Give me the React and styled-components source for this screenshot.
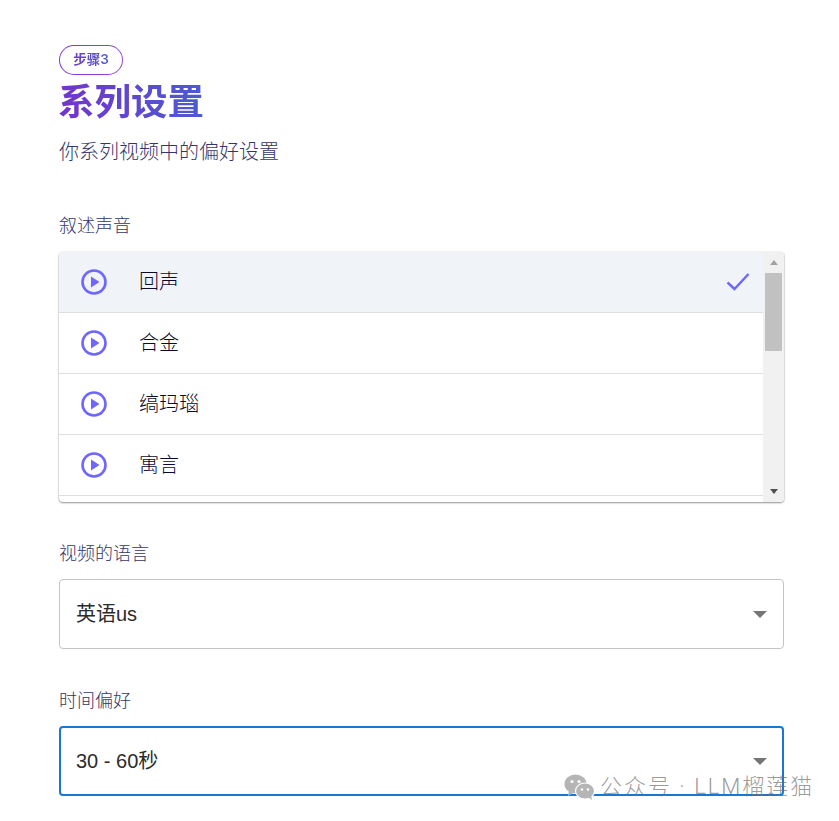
import React from 'react';
import styled, { createGlobalStyle } from 'styled-components';

const FONT = 'Roboto, "Noto Sans CJK SC", sans-serif';

const GlobalStyle = createGlobalStyle`
  html, body {
    margin: 0;
    padding: 0;
    background: #fff;
  }
  body {
    font-family: ${FONT};
  }
`;

const Page = styled.div`
  position: relative;
  width: 839px;
  height: 821px;
  overflow: hidden;
  padding: 45px 55px 0 59px;
  box-sizing: border-box;
`;

const Badge = styled.div`
  display: flex;
  align-items: center;
  justify-content: center;
  box-sizing: border-box;
  width: 64px;
  height: 30px;
  border: 1px solid transparent;
  border-radius: 15px;
  background:
    linear-gradient(#fff, #fff) padding-box,
    linear-gradient(90deg, #7a35d8, #8f4ae0) border-box;
`;

const BadgeText = styled.span`
  font-size: 13.5px;
  line-height: 1;
  font-weight: 600;
  font-family: Inter, "Noto Sans CJK SC", sans-serif;
  background: linear-gradient(90deg, #6f3bd0, #4e5bd0);
  -webkit-background-clip: text;
  background-clip: text;
  color: transparent;
`;

const Title = styled.h1`
  display: block;
  width: fit-content;
  margin: 4px 0 0 -1px;
  font-size: 36.5px;
  line-height: 48px;
  font-weight: 700;
  background: linear-gradient(90deg, #7433d0, #4a5cd0);
  -webkit-background-clip: text;
  background-clip: text;
  color: transparent;
`;

const Subtitle = styled.p`
  margin: 10px 0 0;
  font-size: 20px;
  line-height: 30px;
  font-weight: 300;
  color: #35356b;
`;

const Label = styled.div`
  font-size: 18px;
  line-height: 27px;
  font-weight: 300;
  color: #35356b;
  margin-top: ${(p) => p.$top}px;
  margin-bottom: ${(p) => p.$bottom}px;
`;

const ListCard = styled.div`
  display: flex;
  height: 250px;
  border-radius: 4px;
  overflow: hidden;
  background: #fff;
  box-shadow: 0 1px 2px rgba(0, 0, 0, 0.4), 0 0 2px rgba(0, 0, 0, 0.12);
`;

const Rows = styled.div`
  flex: 1;
  min-width: 0;
  overflow: hidden;
`;

const Row = styled.div`
  display: flex;
  align-items: center;
  box-sizing: border-box;
  height: 61px;
  padding: 0 13px 0 22px;
  border-bottom: 1px solid #dedfe3;
  background: ${(p) => (p.$selected ? '#f0f3f8' : '#fff')};
`;

const PlayIcon = styled.svg`
  width: 26px;
  height: 26px;
  flex-shrink: 0;
`;

const RowName = styled.span`
  margin-left: 32px;
  font-size: 20px;
  line-height: 1;
  font-weight: 300;
  color: #0b0830;
  flex: 1;
`;

const Check = styled.svg`
  width: 24px;
  height: 24px;
  flex-shrink: 0;
`;

const Scrollbar = styled.div`
  display: flex;
  flex-direction: column;
  align-items: center;
  width: 21px;
  flex-shrink: 0;
  background: #f1f1f1;
`;

const ScrollArrow = styled.div`
  display: flex;
  align-items: center;
  justify-content: center;
  height: 21px;
  flex-shrink: 0;
`;

const ScrollThumb = styled.div`
  width: 17px;
  height: 78px;
  background: #c1c1c1;
`;

const ScrollSpace = styled.div`
  flex: 1;
`;

const Triangle = styled.div`
  width: 0;
  height: 0;
  border-left: 4.5px solid transparent;
  border-right: 4.5px solid transparent;
  ${(p) =>
    p.$up
      ? `border-bottom: 5px solid ${p.$color};`
      : `border-top: 5px solid ${p.$color};`}
`;

const Select = styled.div`
  display: flex;
  align-items: center;
  justify-content: space-between;
  box-sizing: border-box;
  height: 70px;
  padding: 0 16px;
  border-radius: 4px;
  border: ${(p) => (p.$focused ? '2px solid #1976d2' : '1px solid #c4c4c4')};
  ${(p) => p.$focused && 'padding: 0 15px;'}
`;

const SelectValue = styled.span`
  font-family: "Liberation Sans", "Noto Sans CJK SC", sans-serif;
  font-size: 20px;
  line-height: 1;
  color: #2b2b2b;
`;

const Caret = styled.div`
  width: 0;
  height: 0;
  border-left: 7px solid transparent;
  border-right: 7px solid transparent;
  border-top: 7px solid #757575;
`;

const Watermark = styled.div`
  position: absolute;
  left: 564px;
  top: 774px;
  display: flex;
  align-items: center;
  gap: 5px;
`;

const WatermarkText = styled.span`
  font-size: 22px;
  line-height: 26px;
  font-weight: 300;
  color: rgba(110, 110, 110, 0.7);
  letter-spacing: 2px;
  white-space: nowrap;
`;

const WechatIcon = styled.svg`
  width: 31px;
  height: 26px;
`;

const voices = ['回声', '合金', '缟玛瑙', '寓言'];

const Play = () => (
  <PlayIcon viewBox="0 0 26 26">
    <circle cx="13" cy="13" r="11.5" fill="none" stroke="#6e66ff" strokeWidth="2.6" />
    <path d="M10 7.5 L18.5 13 L10 18.5 Z" fill="#6e66ff" />
  </PlayIcon>
);

const App = () => (
  <Page>
    <GlobalStyle />
    <Badge>
      <BadgeText>步骤3</BadgeText>
    </Badge>
    <Title>系列设置</Title>
    <Subtitle>你系列视频中的偏好设置</Subtitle>

    <Label $top={45} $bottom={13}>叙述声音</Label>
    <ListCard>
      <Rows>
        {voices.map((name, i) => (
          <Row key={name} $selected={i === 0}>
            <Play />
            <RowName>{name}</RowName>
            {i === 0 && (
              <Check viewBox="0 0 24 24">
                <path d="M1.5 12.5 L8.5 19 L22.5 4" fill="none" stroke="#6e66ff" strokeWidth="2.4" />
              </Check>
            )}
          </Row>
        ))}
      </Rows>
      <Scrollbar>
        <ScrollArrow>
          <Triangle $up $color="#a3a3a3" />
        </ScrollArrow>
        <ScrollThumb />
        <ScrollSpace />
        <ScrollArrow>
          <Triangle $color="#505050" />
        </ScrollArrow>
      </Scrollbar>
    </ListCard>

    <Label $top={38} $bottom={12}>视频的语言</Label>
    <Select>
      <SelectValue>英语us</SelectValue>
      <Caret />
    </Select>

    <Label $top={38} $bottom={12}>时间偏好</Label>
    <Select $focused>
      <SelectValue>30 - 60秒</SelectValue>
      <Caret />
    </Select>

    <Watermark>
      <WechatIcon viewBox="0 0 31 26">
        <ellipse cx="11.5" cy="10" rx="11" ry="9.5" fill="#b5b5b5" />
        <path d="M5 16 L4 22 L11 18 Z" fill="#b5b5b5" />
        <ellipse cx="21" cy="17" rx="9.5" ry="8" fill="#b5b5b5" stroke="#fff" strokeWidth="1.2" />
        <path d="M24 23 L28 26 L27 21 Z" fill="#b5b5b5" />
        <circle cx="8" cy="7.5" r="1.6" fill="#fff" />
        <circle cx="15" cy="7.5" r="1.6" fill="#fff" />
        <circle cx="18" cy="15.5" r="1.3" fill="#fff" />
        <circle cx="24" cy="15.5" r="1.3" fill="#fff" />
      </WechatIcon>
      <WatermarkText>公众号 · LLM榴莲猫</WatermarkText>
    </Watermark>
  </Page>
);

export default App;
